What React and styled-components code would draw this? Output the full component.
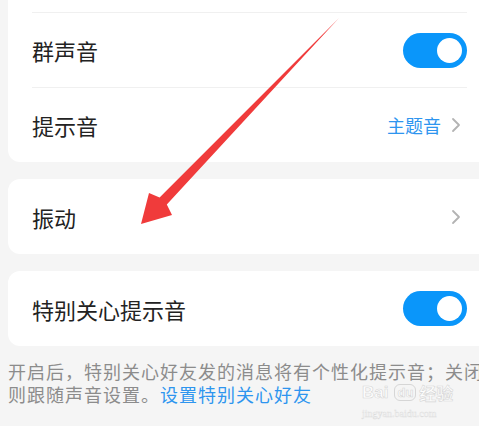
import React from "react";
import styled, { createGlobalStyle } from "styled-components";

const GlobalStyle = createGlobalStyle`
  html, body {
    margin: 0;
    padding: 0;
    background: #f5f5f5;
    overflow: hidden;
  }
  body {
    font-family: "Noto Sans CJK SC", "Noto Sans", sans-serif;
  }
`;

const SettingsPage = () => {
  return (
    <Page>
      <GlobalStyle />
      <Card cut>
        <Row divided>
          <Label>群声音</Label>
          <Toggle on />
        </Row>
        <Row divided>
          <Label>提示音</Label>
          <Value>主题音</Value>
          <Chevron />
        </Row>
      </Card>

      <Card>
        <Row>
          <Label>振动</Label>
          <Chevron />
        </Row>
      </Card>

      <Card>
        <Row>
          <Label>特别关心提示音</Label>
          <Toggle on />
        </Row>
      </Card>

      <Footnote>
        开启后，特别关心好友发的消息将有个性化提示音；关闭则跟随声音设置。
        <Link>设置特别关心好友</Link>
      </Footnote>

      <Watermark>
        <Brand>
          Bai<BrandBox>du</BrandBox>经验
        </Brand>
        <Domain>jingyan.baidu.com</Domain>
      </Watermark>

      <Arrow />
    </Page>
  );
};

const Toggle = ({ on }) => (
  <Track on={on ? 1 : 0}>
    <Knob />
  </Track>
);

const Chevron = () => (
  <ChevronIcon width="10" height="16" viewBox="0 0 10 16">
    <path
      d="M2 2 L8 8 L2 14"
      fill="none"
      stroke="#b3b3b3"
      strokeWidth="1.8"
      strokeLinecap="round"
      strokeLinejoin="round"
    />
  </ChevronIcon>
);

const Arrow = () => (
  <ArrowLayer width="479" height="426" viewBox="0 0 479 426">
    <polygon
      points="339,18 166.8,204.4 172,215 141,224 149,193 159.6,197.4"
      fill="#f03b3b"
    />
  </ArrowLayer>
);

// Styled Components
const Page = styled.div`
  position: relative;
  width: 479px;
  height: 426px;
  display: flex;
  flex-direction: column;
  gap: 17px;
`;

const Card = styled.div`
  margin: 0 -12px 0 8px;
  padding: ${(p) => (p.cut ? "12px 24px 0" : "0 24px")};
  background: #ffffff;
  border-radius: ${(p) => (p.cut ? "0 0 12px 12px" : "12px")};
  display: flex;
  flex-direction: column;
`;

const Row = styled.div`
  height: 75px;
  display: flex;
  align-items: center;
  border-top: ${(p) => (p.divided ? "1px solid #f0f0f0" : "none")};
  box-sizing: border-box;
`;

const Label = styled.span`
  flex: 1;
  font-size: 22px;
  color: #222222;
`;

const Value = styled.span`
  font-size: 18px;
  color: #2e95ef;
  margin-right: 10px;
`;

const ChevronIcon = styled.svg`
  margin-right: 6px;
  display: block;
`;

const Track = styled.div`
  width: 64px;
  height: 35px;
  border-radius: 18px;
  background: ${(p) => (p.on ? "#0a96fa" : "#d9d9d9")};
  display: flex;
  align-items: center;
  justify-content: ${(p) => (p.on ? "flex-end" : "flex-start")};
  padding: 0 5px;
  box-sizing: border-box;
`;

const Knob = styled.div`
  width: 25px;
  height: 25px;
  border-radius: 50%;
  background: #ffffff;
`;

const Footnote = styled.p`
  margin: -3px 0 0 8px;
  font-size: 18px;
  line-height: 23px;
  letter-spacing: 1px;
  color: #8c8c8c;
  white-space: normal;
  width: 490px;
`;

const Link = styled.span`
  color: #2e95ef;
`;

const Watermark = styled.div`
  position: absolute;
  left: 362px;
  top: 380px;
  display: flex;
  flex-direction: column;
  align-items: flex-start;
  color: rgba(255, 255, 255, 0.85);
  font-family: "Liberation Sans", Arial, sans-serif;
`;

const Brand = styled.div`
  display: flex;
  align-items: center;
  font-size: 17px;
  font-weight: bold;
  -webkit-text-stroke: 0.6px #d6d6d6;
  font-family: "Liberation Sans", "Noto Sans CJK SC", sans-serif;
`;

const BrandBox = styled.span`
  margin: 0 3px 0 6px;
  padding: 0 2px;
  border: 1px solid #d6d6d6;
  border-radius: 6px;
  font-size: 13px;
  line-height: 15px;
`;

const Domain = styled.div`
  margin-top: 3px;
  font-size: 10px;
  font-family: "Liberation Serif", serif;
  -webkit-text-stroke: 0.4px #dcdcdc;
`;

const ArrowLayer = styled.svg`
  position: absolute;
  left: 0;
  top: 0;
  pointer-events: none;
`;

export default SettingsPage;
